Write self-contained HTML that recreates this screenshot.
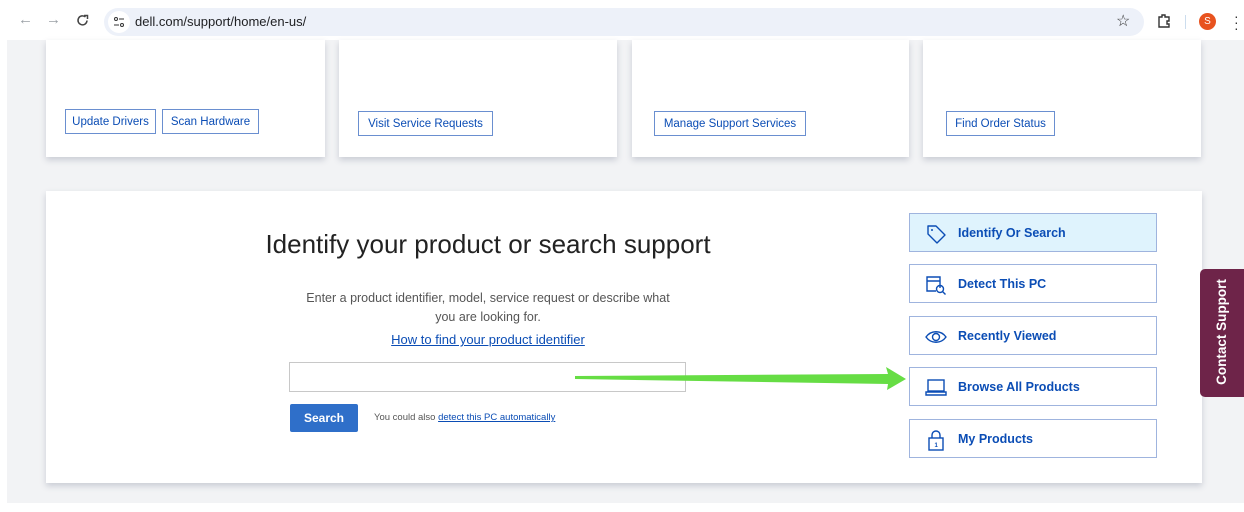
<!DOCTYPE html>
<html><head><meta charset="utf-8"><style>
*{margin:0;padding:0;box-sizing:border-box}
body{width:1244px;height:512px;overflow:hidden;background:#fff;font-family:"Liberation Sans",sans-serif;position:relative}
.abs{position:absolute}
.gray{left:7px;top:40px;width:1237px;height:463px;background:#f2f3f5}
.card{background:#fff;box-shadow:0 3px 6px rgba(60,70,100,.22)}
.btn{position:absolute;border:1px solid #6a8fd0;color:#0b4db5;font-size:11.5px;height:25px;line-height:24px;padding:0;text-align:center;background:#fff;white-space:nowrap}
.side{position:absolute;left:909px;width:248px;height:39px;border:1px solid #9fb4de;background:#fff;color:#0b4db5;font-size:12.5px;font-weight:bold;line-height:38px;padding-left:48px}
.side svg{position:absolute;left:15px;top:9px}
</style></head><body>
<div class="abs" style="left:0;top:0;width:1244px;height:40px;background:#fff"></div>
<div class="abs" style="left:18px;top:11px;color:#9aa0a6;font-size:15px">&#8592;</div>
<div class="abs" style="left:46px;top:11px;color:#9aa0a6;font-size:15px">&#8594;</div>
<svg class="abs" style="left:76px;top:14px" width="13" height="13" viewBox="0 0 13 13"><path d="M11 6.5A4.5 4.5 0 1 1 9.5 3" fill="none" stroke="#444" stroke-width="1.5"/><path d="M8 1.5h3.5V5" fill="none" stroke="#444" stroke-width="1.5"/></svg>
<div class="abs" style="left:104px;top:8px;width:1040px;height:28px;border-radius:14px;background:#edf1f9"></div>
<div class="abs" style="left:108px;top:11px;width:22px;height:22px;border-radius:11px;background:#fff"></div>
<svg class="abs" style="left:113px;top:16px" width="12" height="12" viewBox="0 0 12 12"><circle cx="3" cy="3" r="1.5" fill="none" stroke="#333"/><path d="M6 3h5M1 9h5" stroke="#333"/><circle cx="9" cy="9" r="1.5" fill="none" stroke="#333"/></svg>
<div class="abs" style="left:135px;top:14px;font-size:13px;color:#202124">dell.com/support/home/en-us/</div>
<div class="abs" style="left:1116px;top:11px;font-size:16px;color:#333">&#9734;</div>
<svg class="abs" style="left:1156px;top:13px" width="16" height="16" viewBox="0 0 16 16"><path d="M3 4h3V2h3v2h4v4h-2v3h2v3H3z" fill="none" stroke="#333" stroke-width="1.4"/></svg>
<div class="abs" style="left:1185px;top:15px;width:1px;height:14px;background:#cde"></div>
<div class="abs" style="left:1199px;top:13px;width:17px;height:17px;border-radius:9px;background:#e8531f;color:#fff;font-size:10px;text-align:center;line-height:17px">S</div>
<div class="abs" style="left:1234px;top:13px;font-size:14px;color:#333;line-height:6px">·<br>·<br>·</div>

<div class="abs gray"></div>
<div class="abs card" style="left:46px;top:40px;width:279px;height:117px"></div>
<div class="abs card" style="left:339px;top:40px;width:278px;height:117px"></div>
<div class="abs card" style="left:632px;top:40px;width:277px;height:117px"></div>
<div class="abs card" style="left:923px;top:40px;width:278px;height:117px"></div>
<div class="btn" style="left:65px;top:109px;width:91px">Update Drivers</div>
<div class="btn" style="left:162px;top:109px;width:97px">Scan Hardware</div>
<div class="btn" style="left:358px;top:111px;width:135px">Visit Service Requests</div>
<div class="btn" style="left:654px;top:111px;width:152px">Manage Support Services</div>
<div class="btn" style="left:946px;top:111px;width:109px">Find Order Status</div>

<div class="abs card" style="left:46px;top:191px;width:1156px;height:292px"></div>
<div class="abs" style="left:200px;top:229px;width:576px;text-align:center;font-size:26px;color:#222;font-weight:300">Identify your product or search support</div>
<div class="abs" style="left:298px;top:289px;width:380px;text-align:center;font-size:12.5px;color:#555;line-height:19px">Enter a product identifier, model, service request or describe what you are looking for.</div>
<div class="abs" style="left:280px;top:332px;width:416px;text-align:center;font-size:13px;color:#0b4db5;text-decoration:underline">How to find your product identifier</div>
<div class="abs" style="left:289px;top:362px;width:397px;height:30px;border:1px solid #c8c8c8;background:#fff"></div>
<div class="abs" style="left:290px;top:404px;width:68px;height:28px;background:#2f6fc9;color:#fff;font-size:12px;font-weight:bold;text-align:center;line-height:28px;border-radius:2px">Search</div>
<div class="abs" style="left:374px;top:412px;font-size:9.5px;color:#555">You could also <span style="color:#0b4db5;text-decoration:underline">detect this PC automatically</span></div>
<svg class="abs" style="left:570px;top:365px" width="340" height="30" viewBox="0 0 340 30"><path d="M5 11 L318 9 L316 2 L336 14 L317 25 L318 19 L5 14 Z" fill="#66dd44"/></svg>

<div class="side" style="top:213px;background:#dff3fd">Identify Or Search<svg width="22" height="22" viewBox="0 0 22 22"><path d="M3 3h8l9 9-8 8-9-9z" fill="none" stroke="#0b4db5" stroke-width="1.4" stroke-linejoin="round"/><circle cx="7" cy="7" r="1" fill="#0b4db5"/></svg></div>
<div class="side" style="top:264px">Detect This PC<svg width="22" height="22" viewBox="0 0 22 22"><path d="M15 14V3H2v14h9M2 7h13" fill="none" stroke="#0b4db5" stroke-width="1.4"/><circle cx="15" cy="15" r="3.5" fill="none" stroke="#0b4db5" stroke-width="1.4"/><path d="M17.5 17.5l3 3" stroke="#0b4db5" stroke-width="1.4"/></svg></div>
<div class="side" style="top:316px">Recently Viewed<svg width="22" height="22" viewBox="0 0 22 22"><path d="M1 11c5-7 15-7 20 0-5 7-15 7-20 0z" fill="none" stroke="#0b4db5" stroke-width="1.4"/><circle cx="11" cy="11" r="3.5" fill="none" stroke="#0b4db5" stroke-width="1.4"/></svg></div>
<div class="side" style="top:367px">Browse All Products<svg width="22" height="22" viewBox="0 0 22 22"><rect x="3" y="3" width="16" height="11" fill="none" stroke="#0b4db5" stroke-width="1.4"/><path d="M1 15h20v3H1z" fill="none" stroke="#0b4db5" stroke-width="1.4"/></svg></div>
<div class="side" style="top:419px">My Products<svg width="22" height="22" viewBox="0 0 22 22"><path d="M7 9V6a4 4 0 0 1 8 0v3" fill="none" stroke="#0b4db5" stroke-width="1.4"/><rect x="4" y="9" width="14" height="12" fill="none" stroke="#0b4db5" stroke-width="1.4"/><text x="9.5" y="18" font-size="6" fill="#0b4db5" font-family="Liberation Sans">1</text></svg></div>

<div class="abs" style="left:1200px;top:269px;width:44px;height:128px;background:#6e2449;border-radius:5px 0 0 5px"></div>
<div class="abs" style="left:1158px;top:322px;width:128px;height:20px;transform:rotate(-90deg);color:#fff;font-weight:bold;font-size:13.5px;text-align:center;line-height:20px">Contact Support</div>
</body></html>
